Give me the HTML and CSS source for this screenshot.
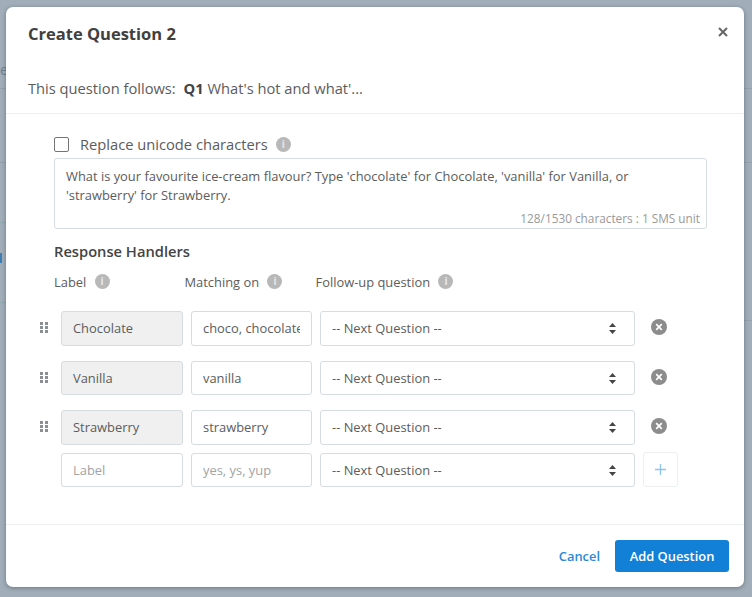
FILE: index.html
```html
<!DOCTYPE html>
<html lang="en">
<head>
  <meta charset="UTF-8">
  <title>Create Question 2</title>
  <meta name="viewport" content="width=device-width, initial-scale=1">
  <link rel="stylesheet" href="styles.css">
</head>
<body>
  <div class="backdrop">
    <span class="behind-text">e</span>
    <span class="behind-line line-1"></span>
    <span class="behind-line line-2"></span>
    <span class="behind-line line-3"></span>
    <span class="behind-line line-4"></span>
    <span class="behind-line line-5"></span>
    <span class="behind-line line-6"></span>
    <span class="behind-line line-7"></span>
    <span class="behind-mark"></span>
  </div>

  <div class="modal">
    <div class="modal-header">
      <h2>Create Question 2</h2>
      <span class="close"><svg width="10" height="10" viewBox="0 0 10 10"><path d="M1 1l8 8M9 1l-8 8" stroke="#666" stroke-width="2"/></svg></span>
    </div>
    <div class="follows">
      This question follows: <b>Q1</b> What's hot and what'...
    </div>

    <div class="modal-body">
      <label class="check-row">
        <span class="checkbox"></span>
        <span class="check-text">Replace unicode characters</span>
        <span class="info">i</span>
      </label>

      <div class="message">
        <p>What is your favourite ice-cream flavour? Type 'chocolate' for Chocolate, 'vanilla' for Vanilla, or 'strawberry' for Strawberry.</p>
        <span class="count">128/1530 characters : 1 SMS unit</span>
      </div>

      <h3>Response Handlers</h3>
      <div class="columns">
        <span class="col-label">Label <span class="info">i</span></span>
        <span class="col-match">Matching on <span class="info">i</span></span>
        <span class="col-next">Follow-up question <span class="info">i</span></span>
      </div>

      <div class="handler">
        <span class="grip"><svg width="9" height="11" viewBox="0 0 9 11"><g fill="#8a8f94"><rect width="3" height="3"/><rect x="5" width="3" height="3"/><rect y="4" width="3" height="3"/><rect x="5" y="4" width="3" height="3"/><rect y="8" width="3" height="3"/><rect x="5" y="8" width="3" height="3"/></g></svg></span>
        <input class="field label-field" type="text" value="Chocolate" disabled>
        <input class="field match-field" type="text" value="choco, chocolate">
        <div class="field next-field">-- Next Question --<span class="updown"><svg width="7" height="11" viewBox="0 0 7 11"><path d="M3.500 0L7 4H0zM3.500 11L0 7h7z" fill="#444"/></svg></span></div>
        <span class="remove"><svg width="16" height="16" viewBox="0 0 16 16"><circle cx="8" cy="8" r="8" fill="#8c8c8c"/><path d="M5.200 5.200l5.600 5.600M10.800 5.200l-5.600 5.600" stroke="#fff" stroke-width="1.700"/></svg></span>
      </div>
      <div class="handler">
        <span class="grip"><svg width="9" height="11" viewBox="0 0 9 11"><g fill="#8a8f94"><rect width="3" height="3"/><rect x="5" width="3" height="3"/><rect y="4" width="3" height="3"/><rect x="5" y="4" width="3" height="3"/><rect y="8" width="3" height="3"/><rect x="5" y="8" width="3" height="3"/></g></svg></span>
        <input class="field label-field" type="text" value="Vanilla" disabled>
        <input class="field match-field" type="text" value="vanilla">
        <div class="field next-field">-- Next Question --<span class="updown"><svg width="7" height="11" viewBox="0 0 7 11"><path d="M3.500 0L7 4H0zM3.500 11L0 7h7z" fill="#444"/></svg></span></div>
        <span class="remove"><svg width="16" height="16" viewBox="0 0 16 16"><circle cx="8" cy="8" r="8" fill="#8c8c8c"/><path d="M5.200 5.200l5.600 5.600M10.800 5.200l-5.600 5.600" stroke="#fff" stroke-width="1.700"/></svg></span>
      </div>
      <div class="handler">
        <span class="grip"><svg width="9" height="11" viewBox="0 0 9 11"><g fill="#8a8f94"><rect width="3" height="3"/><rect x="5" width="3" height="3"/><rect y="4" width="3" height="3"/><rect x="5" y="4" width="3" height="3"/><rect y="8" width="3" height="3"/><rect x="5" y="8" width="3" height="3"/></g></svg></span>
        <input class="field label-field" type="text" value="Strawberry" disabled>
        <input class="field match-field" type="text" value="strawberry">
        <div class="field next-field">-- Next Question --<span class="updown"><svg width="7" height="11" viewBox="0 0 7 11"><path d="M3.500 0L7 4H0zM3.500 11L0 7h7z" fill="#444"/></svg></span></div>
        <span class="remove"><svg width="16" height="16" viewBox="0 0 16 16"><circle cx="8" cy="8" r="8" fill="#8c8c8c"/><path d="M5.200 5.200l5.600 5.600M10.800 5.200l-5.600 5.600" stroke="#fff" stroke-width="1.700"/></svg></span>
      </div>
      <div class="handler new-handler">
        <span class="grip"></span>
        <input class="field label-field" type="text" placeholder="Label">
        <input class="field match-field" type="text" placeholder="yes, ys, yup">
        <div class="field next-field">-- Next Question --<span class="updown"><svg width="7" height="11" viewBox="0 0 7 11"><path d="M3.500 0L7 4H0zM3.500 11L0 7h7z" fill="#444"/></svg></span></div>
        <span class="add"><svg width="13" height="13" viewBox="0 0 13 13"><path d="M6.500 1v11M1 6.500h11" stroke="#8fc3f0" stroke-width="1.300"/></svg></span>
      </div>
    </div>

    <div class="modal-footer">
      <a class="cancel">Cancel</a>
      <button type="button">Add Question</button>
    </div>
  </div>
</body>
</html>
```

FILE: styles.css
```css
* {
  box-sizing: border-box;
}
html, body {
  height: 100%;
}
body {
  margin: 0;
  padding: 7px 8px 10px 6px;
  background-color: #a1aeb9;
  font-family: "Open Sans", Arial, sans-serif;
  font-size: 14.7px;
  color: #5c5c5c;
  overflow: hidden;
}

/* page dimmed behind the modal */
.behind-text {
  position: absolute;
  left: 0;
  top: 60px;
  color: #71808d;
  font-size: 14px;
}
.behind-line {
  position: absolute;
  height: 1px;
  background-color: #94a1ac;
}
.line-1 { left: 0; width: 6px; top: 88px; }
.line-2 { left: 0; width: 6px; top: 162px; }
.line-3 { left: 0; width: 6px; top: 222px; background-color: #8fa9ac; }
.line-4 { left: 0; width: 6px; top: 302px; background-color: #8fa9ac; }
.line-5 { left: 744px; width: 8px; top: 88px; }
.line-6 { left: 744px; width: 8px; top: 162px; }
.line-7 { left: 744px; width: 8px; top: 320px; }
.behind-mark {
  position: absolute;
  left: 0;
  top: 253px;
  width: 2px;
  height: 10px;
  background-color: #3d7fb5;
}

.modal {
  position: relative;
  height: 580px;
  background: white;
  border-radius: 7px;
  box-shadow: 0 1px 4px rgba(40,50,60,0.45);
}
.modal-header {
  height: 54px;
  padding: 14px 22px;
}
h2 {
  margin: 0;
  font-size: 16.5px;
  line-height: 26px;
  font-weight: 700;
  color: #404040;
}
.close {
  position: absolute;
  right: 16px;
  top: 20px;
  line-height: 0;
}
.follows {
  height: 53px;
  padding: 14.500px 22px 0;
  line-height: 24px;
  border-bottom: 1px solid #eceef0;
}
.follows b {
  margin-left: 4px;
  font-weight: 700;
  color: #444;
}

.modal-body {
  height: 411px;
  padding: 21px 37px 0 30px;
  border-bottom: 1px solid #eceef0;
}
.check-row {
  display: flex;
  align-items: center;
  height: 18px;
  margin-left: 18px;
}
.check-text {
  margin-bottom: 1px;
}
.checkbox {
  width: 15px;
  height: 15px;
  margin-right: 11px;
  border: 1px solid #757575;
  border-radius: 2px;
}
.info {
  display: inline-block;
  width: 15px;
  height: 15px;
  margin-left: 5px;
  border-radius: 50%;
  background-color: #b8b8b8;
  color: #e8e8e8;
  font-size: 10px;
  line-height: 15px;
  font-weight: 700;
  text-align: center;
  vertical-align: 2px;
}
.check-row .info {
  margin-left: 8px;
}
.message {
  position: relative;
  height: 71px;
  margin: 5px 0 0 18px;
  padding: 8px 11px;
  border: 1px solid #d5dce2;
  border-radius: 3px;
  font-size: 12.9px;
  line-height: 19px;
}
.message p {
  margin: 0;
}
.count {
  position: absolute;
  right: 6px;
  bottom: 1px;
  font-size: 11.8px;
  line-height: 17px;
  color: #999;
}
h3 {
  margin: 12px 0 0 18px;
  font-size: 14.7px;
  line-height: 20px;
  font-weight: 600;
  color: #444;
}
.columns {
  display: flex;
  height: 20px;
  margin: 11px 0 19px 18px;
  font-size: 12.9px;
  line-height: 20px;
}
.col-label { width: 130.500px; }
.col-match { width: 131px; }

.handler {
  display: flex;
  align-items: center;
  gap: 8px;
  height: 34.500px;
  margin-bottom: 15px;
}
.new-handler {
  margin-top: -7px;
}
.grip {
  width: 18px;
  margin-right: -1px;
  padding-left: 4px;
  align-self: flex-start;
  padding-top: 11px;
  line-height: 0;
}
.field {
  height: 34.500px;
  padding: 0 11px;
  border: 1px solid #d5dce2;
  border-radius: 3px;
  background: white;
  color: #5c5c5c;
  font-family: inherit;
  font-size: 12.9px;
  line-height: 32px;
}
.field::placeholder {
  color: #a3a3a3;
  opacity: 1;
}
.label-field {
  width: 122px;
}
.label-field:disabled {
  background-color: #f0f0f0;
  color: #5c5c5c;
}
.match-field {
  width: 121px;
}
.next-field {
  position: relative;
  width: 315px;
}
.updown {
  position: absolute;
  right: 18px;
  top: 11px;
  line-height: 0;
}
.remove {
  margin-left: 8px;
  margin-top: -2px;
  line-height: 0;
}
.add {
  display: flex;
  align-items: center;
  justify-content: center;
  width: 35px;
  height: 35px;
  border: 1px solid #eceef0;
  border-radius: 3px;
}

.modal-footer {
  display: flex;
  align-items: center;
  justify-content: flex-end;
  gap: 15px;
  height: 62px;
  padding: 0 15px 0 0;
}
.cancel {
  color: #2b8ad8;
  font-size: 12.9px;
  font-weight: 600;
}
button {
  width: 114px;
  height: 32px;
  border: none;
  border-radius: 3px;
  background-color: #1380d8;
  color: white;
  font-family: inherit;
  font-size: 12.9px;
  font-weight: 600;
}
```
